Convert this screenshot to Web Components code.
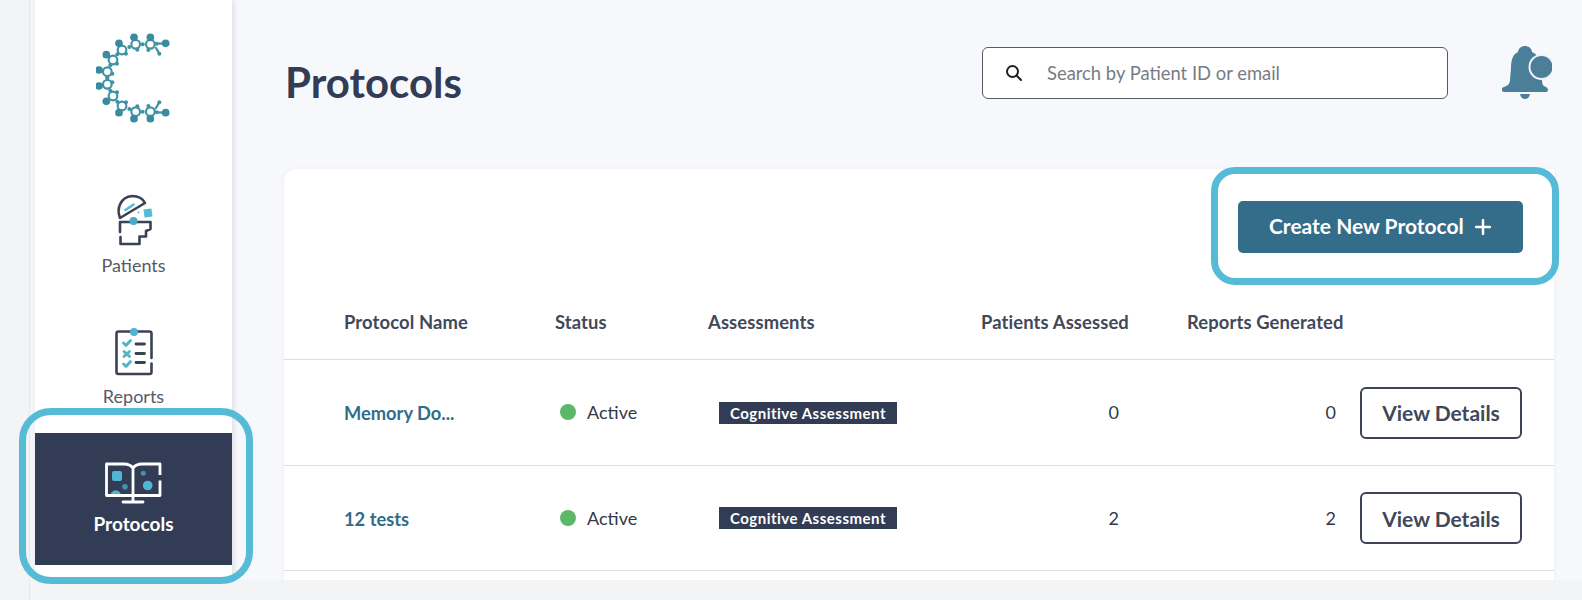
<!DOCTYPE html>
<html lang="en">
<head>
<meta charset="utf-8">
<title>Protocols</title>
<style>
html,body{margin:0;padding:0;height:600px;overflow:hidden;background:#f3f4f5;font-family:"Lato","Open Sans",sans-serif;}
</style>
</head>
<body>
<app-shell>
  <side-nav slot="nav">
    <nav-item icon="patients" label="Patients"></nav-item>
    <nav-item icon="reports" label="Reports"></nav-item>
    <nav-item icon="protocols" label="Protocols" active></nav-item>
  </side-nav>
  <page-header slot="header" title="Protocols"></page-header>
  <protocols-card slot="content">
    <protocol-row name="Memory Do..." patients="0" reports="0"></protocol-row>
    <protocol-row name="12 tests" patients="2" reports="2"></protocol-row>
  </protocols-card>
  <call-out slot="over" style="left:19px;top:408px;width:234px;height:176px;border-radius:32px"></call-out>
  <call-out slot="over" style="left:1211px;top:167px;width:348px;height:118px;border-radius:24px"></call-out>
</app-shell>
<script>
function def(name, css, html, setup){
  customElements.define(name, class extends HTMLElement{
    connectedCallback(){
      if(this.shadowRoot) return;
      const r=this.attachShadow({mode:'open'});
      r.innerHTML='<style>'+css+'</style>'+(typeof html==='function'?html(this):html);
      if(setup) setup(r,this);
    }
  });
}
function logo(){
  const big=[[497,127],[451,109],[402,109],[357,127],[319,161],[297,207]];
  const rings=[[451,130],[407,130],[366,147],[339,177],[322,212]];
  const links=[[497,127,470,128],[478,158,466,138],[430,130,428,130],[386,138,390,136],[352,160,352,158],[331,193,331,196],[322,231,322,226],[451,109,451,116],[402,109,405,116],[357,127,362,134],[319,161,328,166],[297,207,308,209]];
  const small=[[478,158],[428,130],[388,138],[352,160],[331,193],[322,231],[470,128],[412,146],[445,147],[378,158],[351,188],[337,218]];
  let s='';
  for(const [a,b,c,d] of links) s+=`<line x1="${a}" y1="${b}" x2="${c}" y2="${d}"/>`;
  for(const [a,b] of rings) s+=`<circle cx="${a}" cy="${b}" r="13" fill="#fff"/>`;
  for(const [a,b] of big) s+=`<circle cx="${a}" cy="${b}" r="11.500" fill="#3a8aa0" stroke="none"/>`;
  for(const [a,b] of small) s+=`<circle cx="${a}" cy="${b}" r="6" fill="#3f93a5" stroke="none"/>`;
  return `<svg width="76" height="90" viewBox="288 96 228 270" aria-hidden="true"><g fill="none" stroke="#3f93a5" stroke-width="6.500">${s}</g><g fill="none" stroke="#3f93a5" stroke-width="6.500" transform="matrix(1 0 0 -1 0 462)">${s}</g></svg>`;
}
const ICONS={
patients:`<svg width="46" height="60" viewBox="110 192 46 60" fill="none" stroke="#3a4254" stroke-width="2.600" stroke-linecap="round" stroke-linejoin="round" aria-hidden="true">
<path d="M119 218C115 208 120 197 131 196C137 196 142 199 144 203Z"/>
<path d="M124.500 210L132.500 204.500" stroke="#55bbd6" stroke-width="2.600"/>
<rect x="143" y="209" width="8" height="8" fill="#55bbd6" stroke="none" transform="rotate(-8 147 213)"/>
<circle cx="137.500" cy="212.500" r="1" fill="#55bbd6" stroke="none"/>
<path d="M119 232V222H149.500V229L145 231V236.500H138.500V244H119.500V237"/>
<circle cx="132.500" cy="221" r="4" fill="#4aa9c4" stroke="none"/>
</svg>`,
reports:`<svg width="46" height="60" viewBox="110 324 46 60" fill="none" stroke="#3a4254" stroke-width="2.600" stroke-linecap="round" stroke-linejoin="round" aria-hidden="true">
<path d="M150.500 359V334.500Q150.500 332.500 148.500 332.500H117.500Q115.500 332.500 115.500 334.500V373Q115.500 375 117.500 375H148.500Q150.500 375 150.500 373V364.500"/>
<circle cx="133" cy="333" r="4" fill="#4fb4cf" stroke="none"/>
<path d="M122.500 344L125 346.500L129.500 341.500M122.500 365L125 367.500L129.500 362.500M123 352.500L128.500 357.500M128.500 352.500L123 357.500" stroke="#4fb4c8" stroke-width="2.800"/>
<path d="M135 345H143.500M135 354.500H143.500M135 363.500H143.500" stroke-width="2.800"/>
</svg>`,
protocols:`<svg width="60" height="48" viewBox="104 460 60 48" fill="none" stroke="#fff" stroke-width="2.800" stroke-linejoin="round" aria-hidden="true">
<rect x="112" y="471" width="10" height="10" rx="2" fill="#4fb6d6" stroke="none"/>
<circle cx="143.300" cy="473.300" r="2.500" fill="#3f93b0" stroke="none"/>
<circle cx="147.700" cy="485.500" r="4.800" fill="#4fb6d6" stroke="none"/>
<circle cx="125" cy="486.700" r="2.800" fill="#3f93b0" stroke="none"/>
<path d="M110.500 495.500A5.200 5.200 0 0 1 121 495.500Z" fill="#4fb6d6" stroke="none"/>
<path d="M133 468Q130 464 124 464H106.500V495.500H133"/>
<path d="M133 468Q136 464 142 464H160V475M160 480.500V495.500H133"/>
<path d="M133 468V501M123 502H143" stroke-linecap="round"/>
</svg>`
};
def('app-shell',`
:host{display:grid;grid-template-columns:29px 6px 197px 1fr;grid-template-rows:580px 20px;height:600px;position:relative;background:#f3f4f5;overflow:hidden}
.strip{grid-column:2;grid-row:1/3;border-left:1px solid #e6e7ea;background:#f4f5f7}
.nav{grid-column:3;grid-row:1;display:block;position:relative;z-index:1;box-shadow:2px 0 5px rgba(40,50,70,.12)}
.main{grid-column:4;grid-row:1;background:#f7f8fc;display:flex;flex-direction:column;overflow:hidden;min-width:0}
`,`<div class="strip"></div><div class="nav"><slot name="nav"></slot></div><div class="main"><slot name="header"></slot><slot name="content"></slot></div><slot name="over"></slot>`);

def('call-out',`:host{display:block;position:absolute;box-sizing:border-box;border:7px solid #55bbd6;z-index:5;pointer-events:none}`,``);

def('side-nav',`
:host{display:flex;flex-direction:column;height:580px;background:#fff}
.logo{display:flex;justify-content:center;padding-top:33px;box-sizing:border-box;height:185px}
.logo svg{display:block;filter:blur(.35px)}
`,()=>`<div class="logo">${logo()}</div><slot></slot>`);

def('nav-item',`
:host{display:flex;flex-direction:column;align-items:center;height:124px;color:#555a69;font-size:18px;box-sizing:border-box;padding-top:7px}
:host([icon=reports]){height:124px;padding-top:14px}
:host([active]){background:#333c55;color:#fff;font-weight:700;font-size:19px;height:132px;padding-top:27px}
svg{display:block}
.l{line-height:22px;margin-top:2px}
:host([icon=reports]) .l{margin-top:2px}
:host([active]) .l{margin-top:5px}
`,h=>`${ICONS[h.getAttribute('icon')]}<div class="l">${h.getAttribute('label')}</div>`);

def('page-header',`
:host{display:flex;align-items:flex-start;height:169px;flex:none;box-sizing:border-box;padding:0 30px 0 53px}
h1{margin:57px 0 0;font-size:42px;line-height:50px;font-weight:700;color:#333c55}
search-box{margin:47px 0 0 auto}
svg{display:block;margin:46px 0 0 54px}
`,h=>`<h1>${h.getAttribute('title')}</h1><search-box></search-box>
<svg width="50" height="54" viewBox="1500 46 50 54" aria-hidden="true">
<path fill="#4b7f99" d="M1516 52C1511 54 1509 60 1509 68L1508 80C1508 84 1505 86 1502 87Q1499 88 1500 90Q1500 92 1503 92H1543Q1546 92 1546 90Q1546 88 1544 87C1541 86 1540 84 1540 80V70C1540 60 1535 54 1530 52C1529 44 1517 44 1516 52Z"/>
<path fill="#4b7f99" d="M1518 94H1528Q1527 99 1523 99Q1519 99 1518 94Z"/>
<circle cx="1539.500" cy="67" r="12" fill="#4b7f99" stroke="#eef2f6" stroke-width="2"/>
</svg>`);

def('search-box',`
:host{display:flex;align-items:center;box-sizing:border-box;width:466px;height:52px;background:#fff;border:1px solid #565a66;border-radius:6px;padding-left:22px}
svg{display:block;flex:none}
span{margin-left:24px;font-size:18.400px;color:#787b83}
`,`<svg width="18" height="18" viewBox="0 0 18 18" fill="none" stroke="#1d1f24" stroke-width="2" stroke-linecap="round" aria-hidden="true"><circle cx="7.500" cy="7.500" r="5.500"/><path d="M11.800 11.800L16 16"/></svg><span>Search by Patient ID or email</span>`);

def('protocols-card',`
:host{display:block;flex:1;margin-right:28px;margin-left:52px;background:#fff;border-radius:12px 0 0 0;box-shadow:0 0 4px rgba(40,50,70,.05);min-height:0}
.top{display:flex;justify-content:flex-end;padding:32px 31px 0 0;height:84px;box-sizing:border-box}
.btn{display:flex;align-items:center;gap:11px;height:52px;width:285px;box-sizing:border-box;padding:0 0 3px 31px;background:#336d8a;color:#fff;border-radius:5px;font-size:21px;font-weight:700}
.btn svg{display:block;margin-top:2px}
.head{display:grid;grid-template-columns:271px 153px 273px 206px 173px 1fr;height:107px;box-sizing:border-box;border-bottom:1px solid #dcdee2;font-size:18.400px;font-weight:700;letter-spacing:.12px;color:#414859;align-items:center;padding-top:54px;padding-bottom:22px}
.head span:first-child{padding-left:60px}
`,`<div class="top"><div class="btn">Create New Protocol<svg width="16" height="16" viewBox="0 0 16 16" stroke="#fff" stroke-width="2.500" stroke-linecap="round" aria-hidden="true"><path d="M8 1V15M1 8H15"/></svg></div></div>
<div class="head"><span>Protocol Name</span><span>Status</span><span>Assessments</span><span>Patients Assessed</span><span>Reports Generated</span><span></span></div><slot></slot>`);

def('protocol-row',`
:host{display:grid;grid-template-columns:271px 153px 273px 206px 173px 1fr;align-items:center;height:105.500px;box-sizing:border-box;border-bottom:1px solid #dcdee2;font-size:18px;color:#33384a}
.name{padding-left:60px;font-weight:700;font-size:18.300px;color:#2f6d8a;position:relative;top:1px}
.st{display:flex;align-items:center;padding-left:5px}
.dot{width:16px;height:16px;border-radius:50%;background:#5cb868;margin-right:11px}
.tag{display:block;margin:1px 0 0 11px;width:178px;height:22px;line-height:22px;box-sizing:border-box;text-align:center;background:#333c55;color:#fff;font-size:15px;font-weight:700;letter-spacing:.5px}
.num{text-align:right}
.p{padding-right:68px}
.r{padding-right:24px}
.view{box-sizing:border-box;width:162px;height:52px;margin-top:1px;border:2px solid #3d4456;border-radius:6px;display:flex;align-items:center;justify-content:center;font-size:21px;font-weight:700;color:#414859;background:#fff}
`,h=>`<div class="name">${h.getAttribute('name')}</div>
<div class="st"><i class="dot"></i><span>Active</span></div>
<div><span class="tag">Cognitive Assessment</span></div>
<div class="num p">${h.getAttribute('patients')}</div>
<div class="num r">${h.getAttribute('reports')}</div>
<div class="view">View Details</div>`);
</script>
</body>
</html>
